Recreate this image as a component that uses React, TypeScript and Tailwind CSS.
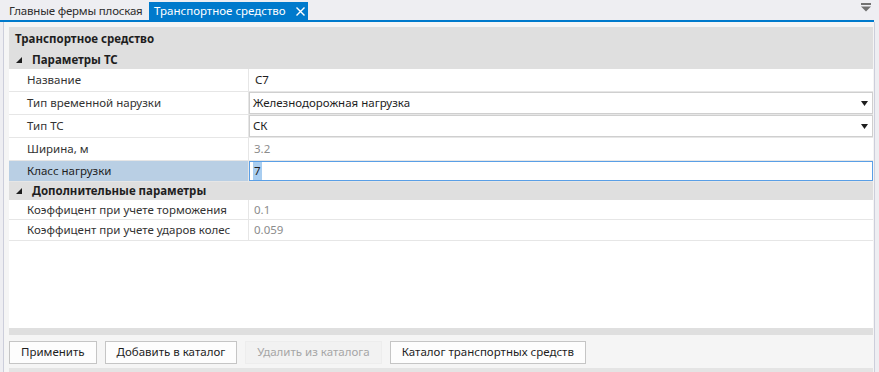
import { useState } from "react";

type Row = {
  label: string;
  value: string;
  kind?: "text" | "combo" | "readonly" | "focused";
  h: string;
};

const mainRows: Row[] = [
  { label: "Название", value: "С7", kind: "text", h: "h-[23px]" },
  { label: "Тип временной нарузки", value: "Железнодорожная нагрузка", kind: "combo", h: "h-[23px]" },
  { label: "Тип ТС", value: "СК", kind: "combo", h: "h-[23px]" },
  { label: "Ширина, м", value: "3.2", kind: "readonly", h: "h-[23px]" },
  { label: "Класс нагрузки", value: "7", kind: "focused", h: "h-[21px]" },
];

const extraRows: Row[] = [
  { label: "Коэффицент при учете торможения", value: "0.1", kind: "readonly", h: "h-[20px]" },
  { label: "Коэффицент при учете ударов колес", value: "0.059", kind: "readonly", h: "h-[21px]" },
];

function Category({ title, h }: { title: string; h: string }) {
  return (
    <div className={`${h} flex items-center bg-[#dfdfdf] font-bold text-[#1e1e1e]`}>
      <svg width="6" height="6" viewBox="0 0 6 6" className="ml-[7px] mr-[10px]">
        <path d="M6 0 V6 H0 Z" fill="#1e1e1e" />
      </svg>
      <span>{title}</span>
    </div>
  );
}

function Arrow() {
  return (
    <svg width="7" height="5" viewBox="0 0 7 5">
      <path d="M0 0 H7 L3.5 5 Z" fill="#1e1e1e" />
    </svg>
  );
}

function PropRow({ row }: { row: Row }) {
  const focused = row.kind === "focused";
  return (
    <div className={`${row.h} flex border-b border-[#e6e6e6] bg-white`}>
      <div
        className={`w-[240px] shrink-0 flex items-center pl-[18px] border-r border-[#e6e6e6] ${
          focused ? "bg-[#b9cfe4] text-[#1e1e1e]" : "text-[#333333]"
        }`}
      >
        {row.label}
      </div>
      <div className="flex-1 flex items-stretch">
        {row.kind === "combo" && (
          <div className="flex-1 flex items-center justify-between border border-[#cfcfcf] pl-[3px] pr-[4px] text-[#1e1e1e]">
            <span>{row.value}</span>
            <Arrow />
          </div>
        )}
        {row.kind === "focused" && (
          <div className="flex-1 flex items-center border border-[#5a9fe6] pl-[3px] text-[#1e1e1e]">
            <span className="bg-[#a8cdf0] px-[1px]">{row.value}</span>
          </div>
        )}
        {row.kind === "text" && <div className="flex items-center pl-[6px] text-[#1e1e1e]">{row.value}</div>}
        {row.kind === "readonly" && <div className="flex items-center pl-[5px] text-[#8c8c8c]">{row.value}</div>}
      </div>
    </div>
  );
}

function Btn({ label, disabled }: { label: string; disabled?: boolean }) {
  return (
    <button
      className={`h-[23px] px-[11px] border ${
        disabled ? "border-[#ededed] bg-[#f2f2f2] text-[#a6a6a6]" : "border-[#c5c5c5] bg-[#fdfdfd] text-[#1e1e1e]"
      }`}
    >
      {label}
    </button>
  );
}

export default function App() {
  const [tab] = useState(1);
  return (
    <div
      className="w-[879px] h-[372px] bg-[#eeeef2] flex flex-col overflow-hidden text-[11.5px]"
      style={{ fontFamily: '"Noto Sans", "Open Sans", sans-serif' }}
    >
      {/* tabs */}
      <div className="h-[20px] flex items-end shrink-0">
        <div
          className={`h-[18px] w-[147px] pl-[9px] flex items-center whitespace-nowrap tracking-[-0.2px] ${
            tab === 0 ? "bg-[#007acc] text-white" : "text-[#2d2d2d]"
          }`}
        >
          Главные фермы плоская
        </div>
        <div className="h-[18px] ml-[2px] w-[159px] pl-[5px] flex items-center gap-[10px] bg-[#007acc] text-white">
          <span>Транспортное средство</span>
          <svg width="9" height="9" viewBox="0 0 9 9">
            <path d="M0.5 0.5 L8.5 8.5 M8.5 0.5 L0.5 8.5" stroke="white" strokeWidth="1.4" />
          </svg>
        </div>
        <div className="flex-1" />
        <svg width="10" height="9" viewBox="0 0 10 9" className="mr-[8px] mb-[8px]">
          <rect x="0" y="0" width="10" height="2" fill="#717171" />
          <path d="M0 3.5 H10 L5 8.5 Z" fill="#717171" />
        </svg>
      </div>
      <div className="h-[2px] bg-[#007acc] mr-[5px] shrink-0" />
      {/* body */}
      <div className="flex-1 ml-[3px] mr-[4px] border-l border-r border-[#cccedb] bg-[#f5f5f5] pl-[5px] pr-[1px] pt-[5px] flex flex-col">
        <div className="h-[308px] flex flex-col bg-[#dfdfdf] shrink-0">
          <div className="h-[23px] flex items-center pl-[6px] font-bold text-[#1e1e1e]">Транспортное средство</div>
          <Category title="Параметры ТС" h="h-[19px]" />
          {mainRows.map((r) => (
            <PropRow key={r.label} row={r} />
          ))}
          <Category title="Дополнительные параметры" h="h-[18px]" />
          {extraRows.map((r) => (
            <PropRow key={r.label} row={r} />
          ))}
          <div className="flex-1 bg-white" />
          <div className="h-[7px] bg-[#dfdfdf]" />
        </div>
        <div className="flex items-center gap-[8px] pt-[1px] h-[33px]">
          <Btn label="Применить" />
          <Btn label="Добавить в каталог" />
          <Btn label="Удалить из каталога" disabled />
          <Btn label="Каталог транспортных средств" />
        </div>
        <div className="flex-1 bg-[#e4e4e4]" />
      </div>
    </div>
  );
}
